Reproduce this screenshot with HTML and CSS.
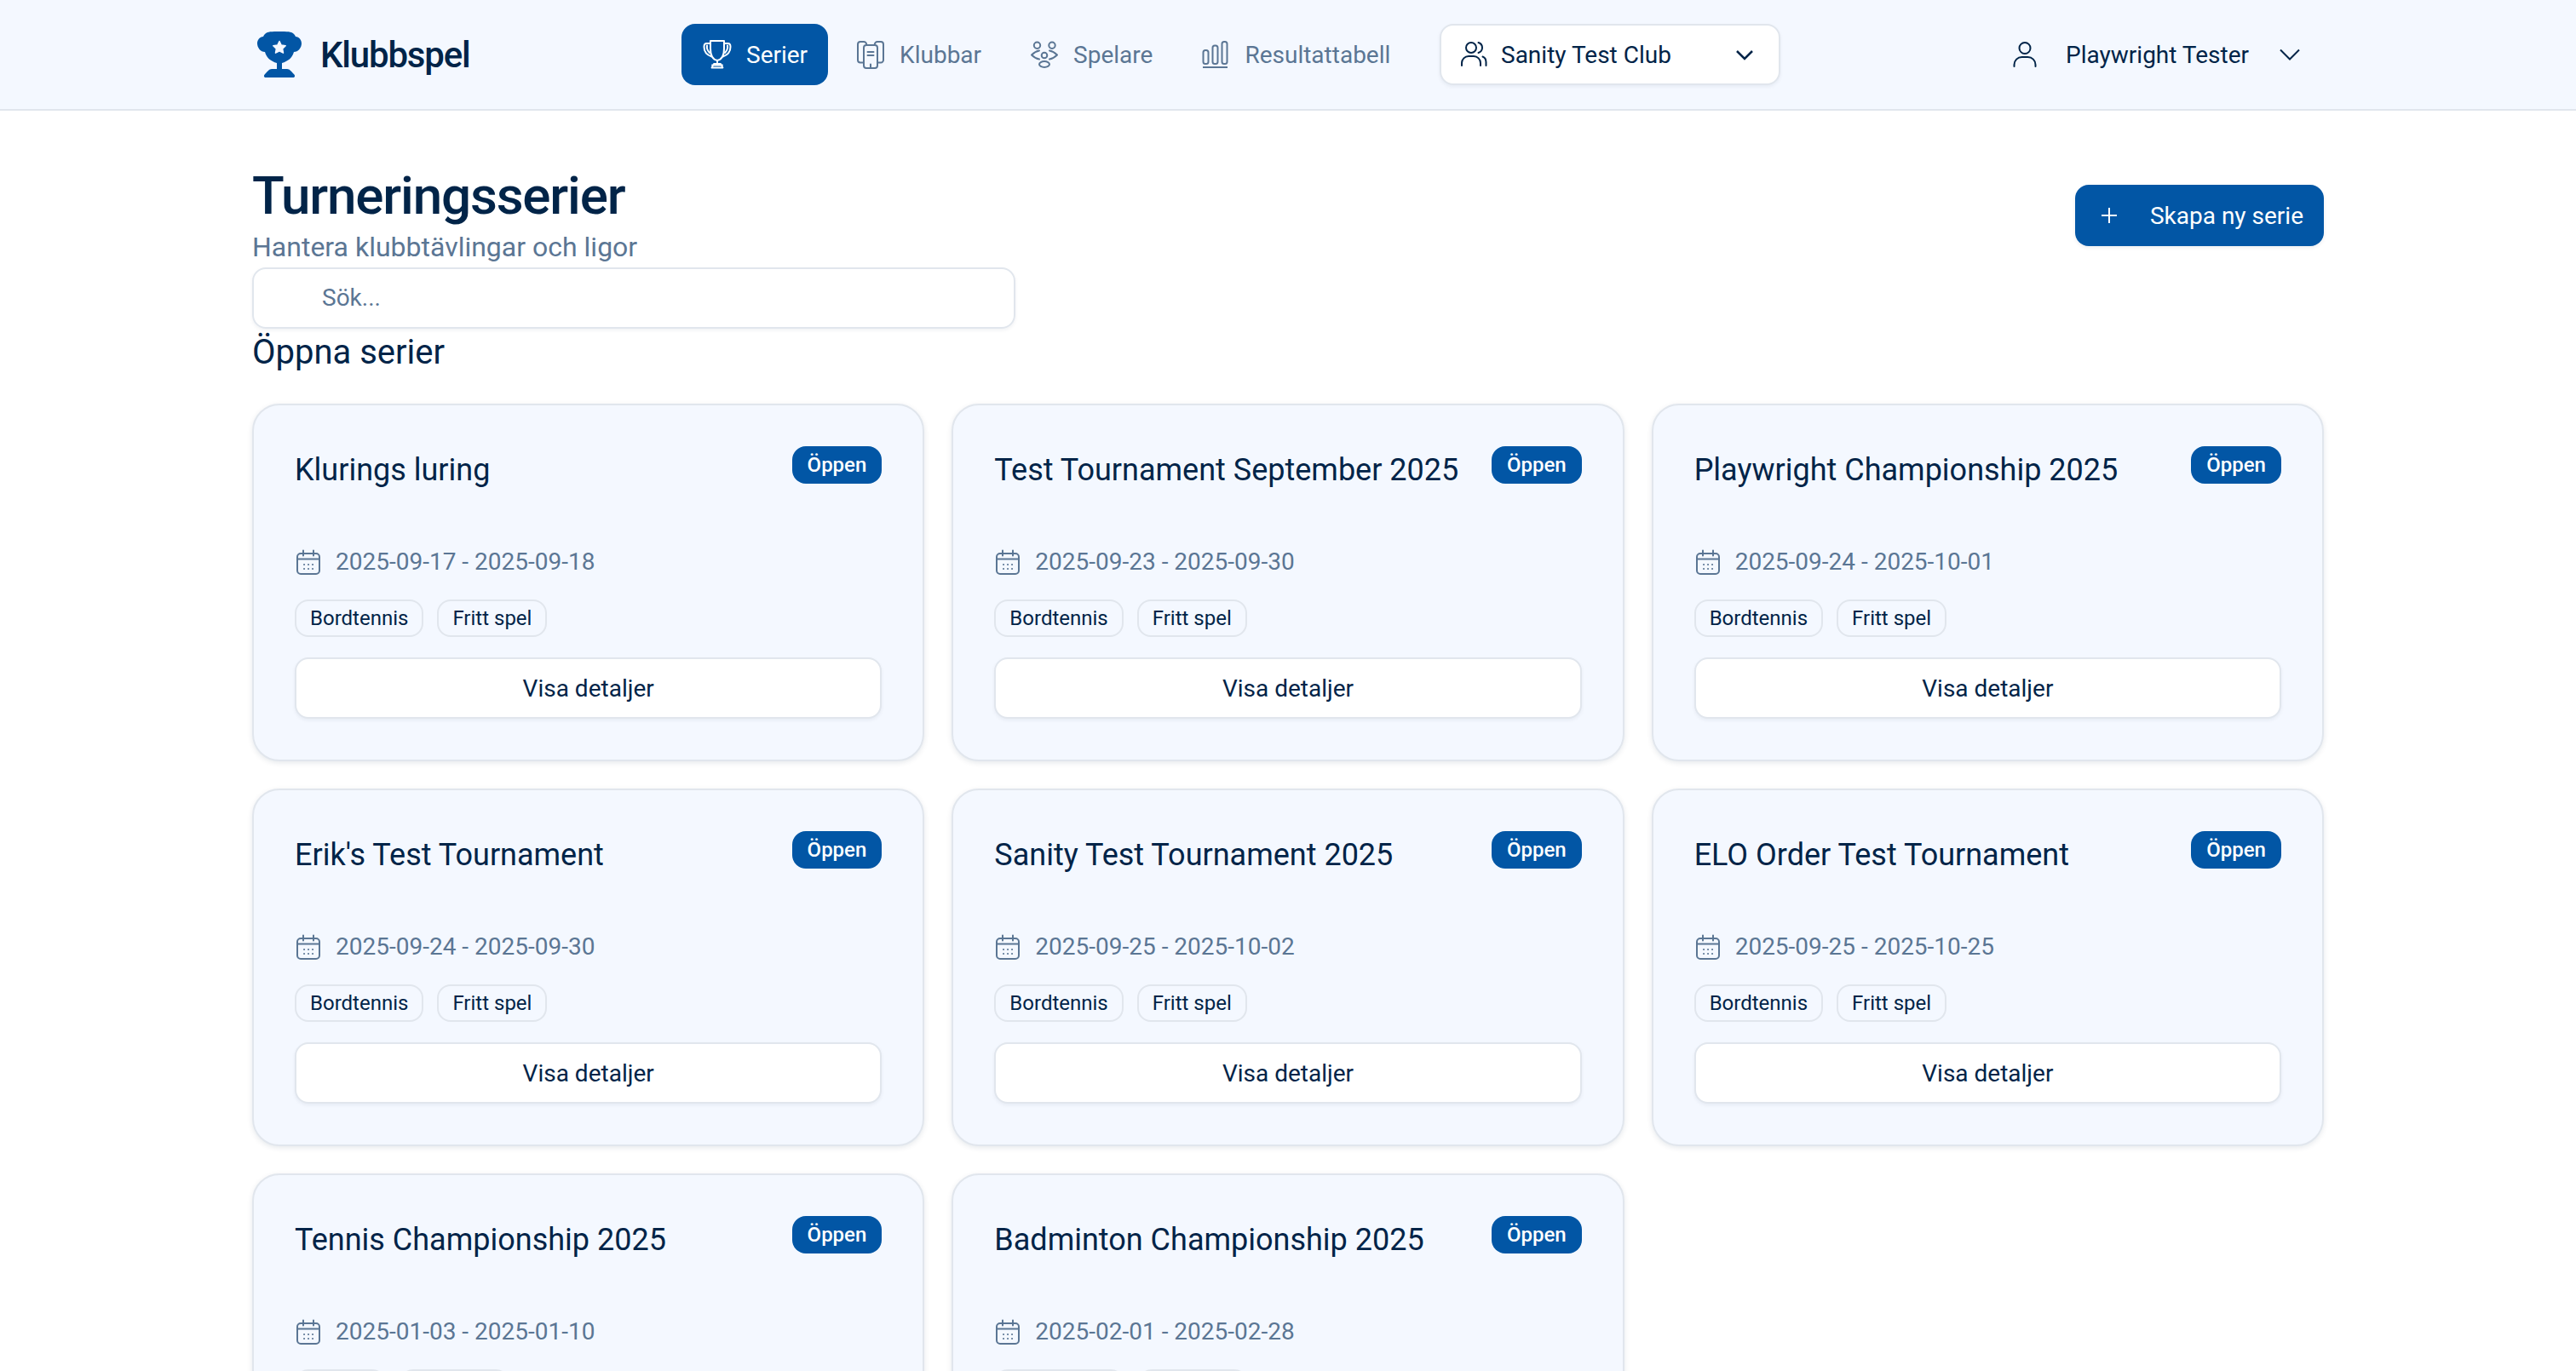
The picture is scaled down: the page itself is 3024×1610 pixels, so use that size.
FILE: index.html
```html
<!DOCTYPE html>
<html lang="sv">
<head>
<meta charset="utf-8">
<title>Klubbspel</title>
<link rel="stylesheet" href="styles.css">
</head>
<body>
<svg class="defs" width="0" height="0">
  <symbol id="i-trophy" viewBox="-2 -2 36 36">
    <path d="M8 0h16v9c0 8-3 13-8 14-5-1-8-6-8-14z"/>
    <path d="M8 3H3.500C1.500 3 .5 4.500 .5 7c0 5 3 9.500 9 11.500M24 3h4.500c2 0 3 1.500 3 4 0 5-3 9.500-9 11.500"/>
    <path d="M4 5.500c-.5 3 .5 6 3 8.500M28 5.500c.5 3-.5 6-3 8.500"/>
    <path d="M16 23v4M12 27h8l2.500 4.500h-13zM10 28.500h12" stroke-width="1.800"/>
  </symbol>
  <symbol id="i-club" viewBox="-2 -2 36 36">
    <path d="M8 25.500H4a3 3 0 0 1-3-3V4a3 3 0 0 1 3-3h4c2 0 3 1 3.500 4M24 25.500h4a3 3 0 0 0 3-3V4a3 3 0 0 0-3-3h-4c-2 0-3 1-3.500 4"/>
    <path d="M11 5h10a3 3 0 0 1 3 3v21a3 3 0 0 1-3 3H11a3 3 0 0 1-3-3V8a3 3 0 0 1 3-3z"/>
    <path d="M12.500 13h7M12.500 17h7M16 27.500V32"/>
  </symbol>
  <symbol id="i-players" viewBox="-2 -2 36 36">
    <circle cx="7.500" cy="5.300" r="3.700"/><circle cx="25" cy="5.300" r="3.700"/>
    <circle cx="16" cy="17" r="3.300"/><ellipse cx="16" cy="27.500" rx="6" ry="3.500"/>
    <path d="M10 11.500C6.500 12 3.500 14 1 16.500c2.500 2.500 5.500 4.500 9 5M22 11.500c3.500.5 6.500 2.500 9 5-2.500 2.500-5.500 4.500-9 5"/>
  </symbol>
  <symbol id="i-chart" viewBox="-2 -2 36 36">
    <rect x="1.500" y="11" width="6" height="16" rx="2.500"/>
    <rect x="12.500" y="5.500" width="6" height="21.500" rx="2.500"/>
    <rect x="23.500" y="1" width="6" height="26" rx="2.500"/>
    <path d="M1 31h29" stroke-linecap="butt"/>
  </symbol>
  <symbol id="i-users" viewBox="-2 -2 36 36">
    <circle cx="13" cy="8" r="6"/>
    <path d="M2 29v-3a8 8 0 0 1 8-8h6a8 8 0 0 1 8 8v3M21.500 2c3 1 4.500 3.500 4.500 6s-1.500 5-4.500 6M26.500 18.500c2.500 1 4 3.500 4 6.500v4"/>
  </symbol>
  <symbol id="i-user" viewBox="-2 -2 36 36">
    <circle cx="16" cy="8.500" r="6.500"/>
    <path d="M3.500 30v-2c0-5 4-9 9-9h7c5 0 9 4 9 9v2"/>
  </symbol>
  <symbol id="i-cal" viewBox="0 0 32 32">
    <rect x="3" y="6" width="26" height="24" rx="4"/>
    <path d="M10 2.500v6M22 2.500v6M3 12.500h26"/>
    <path class="dots" d="M11 19h.1M16 19h.1M21 19h.1M11 24h.1M16 24h.1M21 24h.1"/>
  </symbol>
</svg>

<header class="topbar">
  <div class="brand">
    <svg class="brand-icon" viewBox="0 0 52 54">
      <path fill="#0256a5" d="M12 1C16-.5 36-.5 40 1c3 1 4 3 5 5 4 0 7 4 7 8 0 5-4 10-9 10-2 7-7 11-14 13v7h6c3 0 5 3 8 6 2 2 1 4-1 4H10c-2 0-3-2-1-4 3-3 5-6 8-6h6v-7C16 35 11 31 9 24c-5 0-9-5-9-10 0-4 3-8 7-8 1-2 2-4 5-5z"/>
      <path class="star" d="M26 11.500l2.200 4.500 5 .7-3.600 3.500.9 5-4.500-2.400-4.500 2.400.9-5-3.600-3.500 5-.7z"/>
    </svg>
    <span class="brand-name">Klubbspel</span>
  </div>
  <nav class="nav">
    <a class="nav-item active"><svg class="icon"><use href="#i-trophy"/></svg>Serier</a>
    <a class="nav-item"><svg class="icon"><use href="#i-club"/></svg>Klubbar</a>
    <a class="nav-item"><svg class="icon"><use href="#i-players"/></svg>Spelare</a>
    <a class="nav-item"><svg class="icon"><use href="#i-chart"/></svg>Resultattabell</a>
  </nav>
  <div class="club-select">
    <svg class="icon"><use href="#i-users"/></svg>
    <span class="club-name">Sanity Test Club</span>
    <svg class="chev" viewBox="0 0 24 24"><path d="M3 8l9 9 9-9"/></svg>
  </div>
  <div class="user-menu">
    <svg class="icon"><use href="#i-user"/></svg>
    <span class="user-name">Playwright Tester</span>
    <svg class="chev thin" viewBox="0 0 24 24"><path d="M1 6.500l11 11 11-11"/></svg>
  </div>
</header>

<main class="page">
  <div class="page-head">
    <div>
      <h1>Turneringsserier</h1>
      <p class="sub">Hantera klubbtävlingar och ligor</p>
    </div>
    <button class="btn-new"><svg class="plus" viewBox="0 0 24 24"><path d="M12 3v18M3 12h18"/></svg>Skapa ny serie</button>
  </div>
  <div class="search">Sök...</div>
  <h2>Öppna serier</h2>

  <div class="grid">
    <article class="card">
      <div class="card-top"><h3>Klurings luring</h3><span class="badge">Öppen</span></div>
      <div class="dates"><svg class="icon-cal"><use href="#i-cal"/></svg>2025-09-17 - 2025-09-18</div>
      <div class="tags"><span class="tag">Bordtennis</span><span class="tag">Fritt spel</span></div>
      <button class="btn-details">Visa detaljer</button>
    </article>
    <article class="card">
      <div class="card-top"><h3>Test Tournament September 2025</h3><span class="badge">Öppen</span></div>
      <div class="dates"><svg class="icon-cal"><use href="#i-cal"/></svg>2025-09-23 - 2025-09-30</div>
      <div class="tags"><span class="tag">Bordtennis</span><span class="tag">Fritt spel</span></div>
      <button class="btn-details">Visa detaljer</button>
    </article>
    <article class="card">
      <div class="card-top"><h3>Playwright Championship 2025</h3><span class="badge">Öppen</span></div>
      <div class="dates"><svg class="icon-cal"><use href="#i-cal"/></svg>2025-09-24 - 2025-10-01</div>
      <div class="tags"><span class="tag">Bordtennis</span><span class="tag">Fritt spel</span></div>
      <button class="btn-details">Visa detaljer</button>
    </article>
    <article class="card">
      <div class="card-top"><h3>Erik's Test Tournament</h3><span class="badge">Öppen</span></div>
      <div class="dates"><svg class="icon-cal"><use href="#i-cal"/></svg>2025-09-24 - 2025-09-30</div>
      <div class="tags"><span class="tag">Bordtennis</span><span class="tag">Fritt spel</span></div>
      <button class="btn-details">Visa detaljer</button>
    </article>
    <article class="card">
      <div class="card-top"><h3>Sanity Test Tournament 2025</h3><span class="badge">Öppen</span></div>
      <div class="dates"><svg class="icon-cal"><use href="#i-cal"/></svg>2025-09-25 - 2025-10-02</div>
      <div class="tags"><span class="tag">Bordtennis</span><span class="tag">Fritt spel</span></div>
      <button class="btn-details">Visa detaljer</button>
    </article>
    <article class="card">
      <div class="card-top"><h3>ELO Order Test Tournament</h3><span class="badge">Öppen</span></div>
      <div class="dates"><svg class="icon-cal"><use href="#i-cal"/></svg>2025-09-25 - 2025-10-25</div>
      <div class="tags"><span class="tag">Bordtennis</span><span class="tag">Fritt spel</span></div>
      <button class="btn-details">Visa detaljer</button>
    </article>
    <article class="card">
      <div class="card-top"><h3>Tennis Championship 2025</h3><span class="badge">Öppen</span></div>
      <div class="dates"><svg class="icon-cal"><use href="#i-cal"/></svg>2025-01-03 - 2025-01-10</div>
      <div class="tags"><span class="tag">Tennis</span><span class="tag">Fritt spel</span></div>
      <button class="btn-details">Visa detaljer</button>
    </article>
    <article class="card">
      <div class="card-top"><h3>Badminton Championship 2025</h3><span class="badge">Öppen</span></div>
      <div class="dates"><svg class="icon-cal"><use href="#i-cal"/></svg>2025-02-01 - 2025-02-28</div>
      <div class="tags"><span class="tag">Badminton</span><span class="tag">Fritt spel</span></div>
      <button class="btn-details">Visa detaljer</button>
    </article>
  </div>
</main>
</body>
</html>
```
FILE: styles.css
```css
html {
  overflow: hidden;
}
body {
  margin: 0;
  height: 1610px;
  overflow: hidden;
  background: #fff;
  color: #012448;
  font-family: Roboto, sans-serif;
  font-size: 28px;
}
.defs {
  position: absolute;
}
.icon,
.icon-cal {
  fill: none;
  stroke: currentColor;
  stroke-width: 2;
  stroke-linecap: round;
  stroke-linejoin: round;
  flex: none;
}
.icon {
  width: 36px;
  height: 36px;
}
.icon-cal {
  width: 32px;
  height: 32px;
  color: #5b7694;
}
.topbar {
  display: flex;
  align-items: center;
  height: 128px;
  padding: 0 296px 0 302px;
  background: #f4f8ff;
  border-bottom: 2px solid #e1e6ed;
}
.brand {
  display: flex;
  align-items: center;
  gap: 22px;
  width: 498px;
}
.brand-icon {
  width: 52px;
  height: 54px;
}
.star {
  fill: #f4f8ff;
  stroke: #f4f8ff;
  stroke-width: 1.500;
  stroke-linejoin: round;
}
.brand-name {
  font-size: 42px;
  font-weight: 500;
  letter-spacing: -1.200px;
}
.nav {
  display: flex;
  gap: 8px;
  width: 890px;
}
.nav-item {
  display: flex;
  align-items: center;
  gap: 16px;
  height: 72px;
  padding: 0 24px;
  border-radius: 16px;
  color: #5b7694;
}
.nav-item.active {
  background: #0256a5;
  color: #fff;
}
.club-select {
  display: flex;
  align-items: center;
  gap: 14px;
  box-sizing: border-box;
  width: 400px;
  height: 72px;
  padding: 0 28px 0 20px;
  background: #fff;
  border: 2px solid #e1e6ed;
  border-radius: 16px;
  box-shadow: 0 2px 4px rgba(1, 36, 72, 0.06);
}
.club-name {
  flex: 1;
}
.chev {
  width: 24px;
  height: 24px;
  fill: none;
  stroke: currentColor;
  stroke-width: 2.500;
  flex: none;
}
.chev.thin {
  stroke-width: 2;
}
.user-menu {
  display: flex;
  align-items: center;
  margin-left: auto;
  gap: 30px;
  padding-right: 28px;
}
.user-name {
  margin-right: 6px;
}
.page {
  padding: 62px 296px 0;
}
.page-head {
  display: flex;
  justify-content: space-between;
  align-items: center;
}
h1 {
  margin: 0;
  font-size: 62px;
  line-height: 76px;
  font-weight: 500;
  letter-spacing: -1.200px;
}
.sub {
  margin: 0 0 2px;
  font-size: 32px;
  line-height: 44px;
  color: #5b7694;
}
.btn-new {
  display: flex;
  align-items: center;
  gap: 36px;
  height: 72px;
  padding: 0 24px 0 28px;
  background: #0256a5;
  color: #fff;
  font: 400 28px Roboto, sans-serif;
  border: 0;
  border-radius: 16px;
  box-shadow: 0 2px 4px rgba(1, 36, 72, 0.08);
}
.plus {
  width: 24px;
  height: 24px;
  fill: none;
  stroke: #fff;
  stroke-width: 2;
}
.search {
  box-sizing: border-box;
  width: 896px;
  height: 72px;
  padding-left: 80px;
  line-height: 68px;
  border: 2px solid #e1e6ed;
  border-radius: 16px;
  color: #5b7694;
  box-shadow: 0 2px 4px rgba(1, 36, 72, 0.06);
}
h2 {
  margin: 0 0 32px;
  font-size: 40px;
  line-height: 56px;
  font-weight: 400;
}
.grid {
  display: grid;
  grid-template-columns: repeat(3, 1fr);
  gap: 32px;
}
.card {
  box-sizing: border-box;
  height: 420px;
  padding: 48px;
  background: #f4f8ff;
  border: 2px solid #e1e6ed;
  border-radius: 32px;
  box-shadow: 0 2px 6px rgba(1, 36, 72, 0.1);
}
.card-top {
  display: flex;
  justify-content: space-between;
  align-items: flex-start;
  height: 119px;
}
h3 {
  margin: 0;
  font-size: 36px;
  line-height: 56px;
  font-weight: 400;
}
.badge {
  padding: 0 18px;
  height: 44px;
  line-height: 44px;
  background: #0256a5;
  color: #fff;
  border-radius: 16px;
  font-size: 24px;
  font-weight: 500;
}
.dates {
  display: flex;
  align-items: center;
  gap: 16px;
  color: #5b7694;
}
.tags {
  display: flex;
  gap: 16px;
  margin-top: 28px;
}
.tag {
  box-sizing: border-box;
  height: 44px;
  padding: 0 16px;
  line-height: 40px;
  border: 2px solid #e1e6ed;
  border-radius: 16px;
  font-size: 24px;
}
.btn-details {
  display: block;
  width: 100%;
  height: 72px;
  margin-top: 24px;
  background: #fff;
  color: #012448;
  font: 400 28px Roboto, sans-serif;
  border: 2px solid #e1e6ed;
  border-radius: 16px;
  box-shadow: 0 2px 4px rgba(1, 36, 72, 0.06);
}
```
